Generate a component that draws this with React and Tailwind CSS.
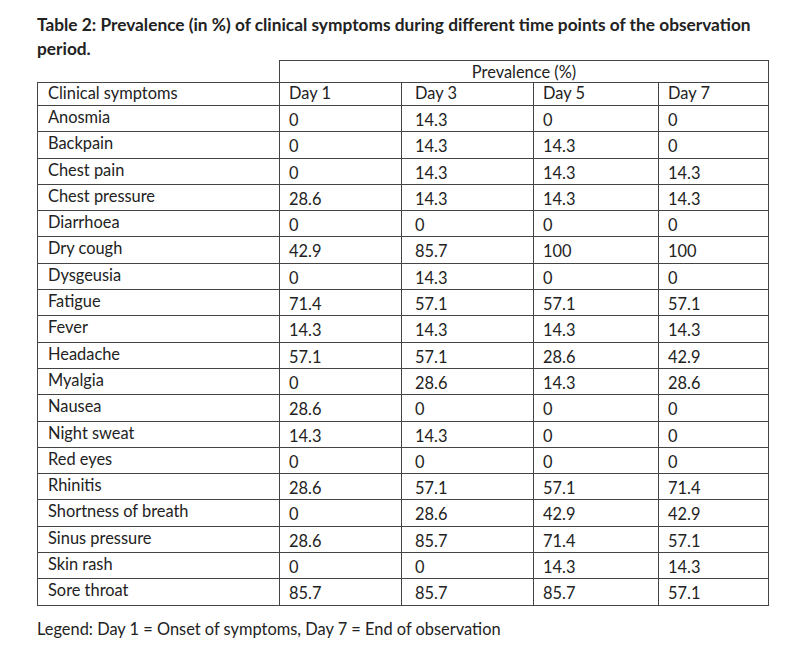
import React from "react";

const rows = [
  ["Anosmia", "0", "14.3", "0", "0"],
  ["Backpain", "0", "14.3", "14.3", "0"],
  ["Chest pain", "0", "14.3", "14.3", "14.3"],
  ["Chest pressure", "28.6", "14.3", "14.3", "14.3"],
  ["Diarrhoea", "0", "0", "0", "0"],
  ["Dry cough", "42.9", "85.7", "100", "100"],
  ["Dysgeusia", "0", "14.3", "0", "0"],
  ["Fatigue", "71.4", "57.1", "57.1", "57.1"],
  ["Fever", "14.3", "14.3", "14.3", "14.3"],
  ["Headache", "57.1", "57.1", "28.6", "42.9"],
  ["Myalgia", "0", "28.6", "14.3", "28.6"],
  ["Nausea", "28.6", "0", "0", "0"],
  ["Night sweat", "14.3", "14.3", "0", "0"],
  ["Red eyes", "0", "0", "0", "0"],
  ["Rhinitis", "28.6", "57.1", "57.1", "71.4"],
  ["Shortness of breath", "0", "28.6", "42.9", "42.9"],
  ["Sinus pressure", "28.6", "85.7", "71.4", "57.1"],
  ["Skin rash", "0", "0", "14.3", "14.3"],
  ["Sore throat", "85.7", "85.7", "85.7", "57.1"],
];

const cell = "border border-[#444] px-[9px] align-top";

function App() {
  return (
    <div
      className="w-[800px] h-[647px] bg-white text-[#222] pl-[37px] pt-[13px]"
      style={{ fontFamily: "Lato, 'Open Sans', sans-serif" }}
    >
      <h1 className="font-bold text-[17.3px] leading-[24px] w-[731px]">
        Table 2: Prevalence (in %) of clinical symptoms during different time points of the observation period.
      </h1>

      <table className="mt-[-1px] border-collapse w-[731px] table-fixed text-[16.4px] leading-[20px]">
        <colgroup>
          <col className="w-[242px]" />
          <col className="w-[122px]" />
          <col className="w-[132px]" />
          <col className="w-[125px]" />
          <col className="w-[110px]" />
        </colgroup>
        <thead>
          <tr className="h-[22px]">
            <th className="border-b border-[#444] p-0"></th>
            <th colSpan={4} className="border border-[#444] font-normal text-center p-0 leading-[20px]">
              Prevalence (%)
            </th>
          </tr>
          <tr className="h-[23px]">
            <th className={`${cell} font-normal text-left pl-[10px]`}>Clinical symptoms</th>
            <th className={`${cell} font-normal text-left`}>Day 1</th>
            <th className={`${cell} font-normal text-left pl-[13px]`}>Day 3</th>
            <th className={`${cell} font-normal text-left`}>Day 5</th>
            <th className={`${cell} font-normal text-left`}>Day 7</th>
          </tr>
        </thead>
        <tbody>
          {rows.map((r) => (
            <tr key={r[0]} className="h-[26.3px]">
              <td className={`${cell} pl-[10px] pt-[1px]`}>{r[0]}</td>
              <td className={`${cell} pt-[4px]`}>{r[1]}</td>
              <td className={`${cell} pl-[13px] pt-[4px]`}>{r[2]}</td>
              <td className={`${cell} pt-[4px]`}>{r[3]}</td>
              <td className={`${cell} pt-[4px]`}>{r[4]}</td>
            </tr>
          ))}
        </tbody>
      </table>

      <p className="mt-[13px] text-[16.4px] leading-[20px]">
        Legend: Day 1 = Onset of symptoms, Day 7 = End of observation
      </p>
    </div>
  );
}

export default App;
